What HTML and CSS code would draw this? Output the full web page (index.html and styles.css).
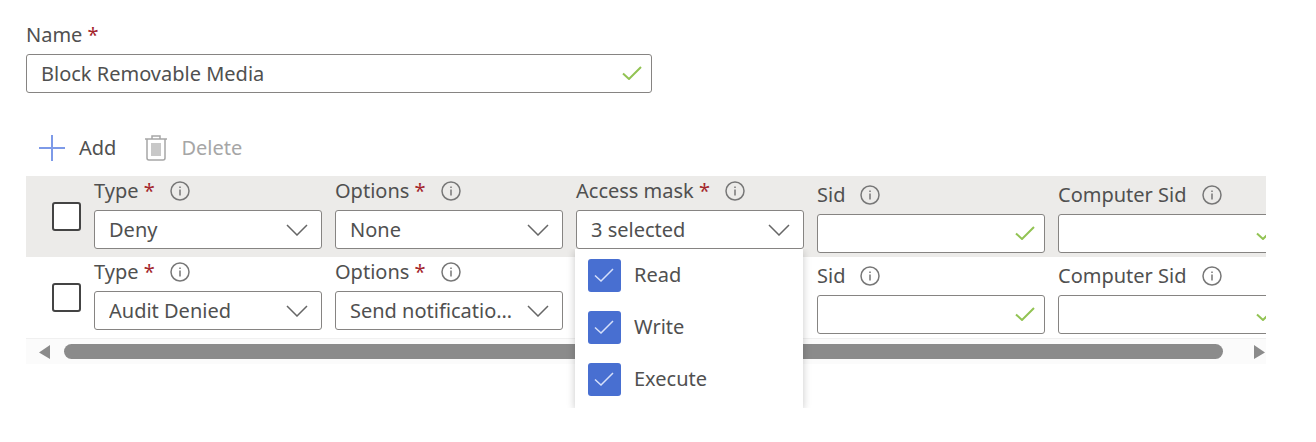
FILE: index.html
```html
<!DOCTYPE html>
<html lang="en">
<head>
	<meta charset="utf-8">
	<meta name="viewport" content="width=device-width, initial-scale=1">
	<title>Block Removable Media</title>
	<link rel="stylesheet" href="styles.css">
</head>
<body>
	<!-- shared icons -->
	<svg class="sprite" aria-hidden="true">
		<symbol id="check" viewBox="0 0 20 14"><path d="M1 7.5l6 5.5L19 1"/></symbol>
		<symbol id="chevron" viewBox="0 0 22 12"><path d="M1 1l10 10L21 1"/></symbol>
		<symbol id="info" viewBox="0 0 20 20"><circle cx="10" cy="10" r="9"/><path d="M10 8.5v6M10 5.5v1.6"/></symbol>
	</svg>

	<main class="page">
		<div class="name-field">
			<label class="label" for="name">Name <span class="req">*</span></label>
			<div class="box">
				<input type="text" id="name" value="Block Removable Media">
				<svg class="valid"><use href="#check"/></svg>
			</div>
		</div>

		<div class="toolbar">
			<button type="button" class="tool">
				<svg class="icon-add" viewBox="0 0 26 26"><path d="M13 0v26M0 13h26"/></svg>
				Add
			</button>
			<button type="button" class="tool" disabled>
				<svg class="icon-trash" viewBox="0 0 22 26">
					<path d="M0 4h22M7 3.500V1h8v2.500M2 4v19q0 2 2 2h14q2 0 2-2V4"/>
					<path class="fill" d="M6 8h10v13H6z"/>
				</svg>
				Delete
			</button>
		</div>

		<section class="entries">
			<div class="rows">
				<div class="row selected">
					<input type="checkbox" class="pick" aria-label="Select entry 1">
					<div class="field">
						<div class="head"><label for="type1">Type <span class="req">*</span></label><svg class="info"><use href="#info"/></svg></div>
						<div class="box">
							<select id="type1"><option>Deny</option></select>
							<svg class="chevron"><use href="#chevron"/></svg>
						</div>
					</div>
					<div class="field">
						<div class="head"><label for="options1">Options <span class="req">*</span></label><svg class="info"><use href="#info"/></svg></div>
						<div class="box">
							<select id="options1"><option>None</option></select>
							<svg class="chevron"><use href="#chevron"/></svg>
						</div>
					</div>
					<div class="field">
						<div class="head"><label for="mask1">Access mask <span class="req">*</span></label><svg class="info"><use href="#info"/></svg></div>
						<div class="box">
							<button type="button" id="mask1" class="multi" aria-expanded="true">3 selected</button>
							<svg class="chevron"><use href="#chevron"/></svg>
						</div>
					</div>
					<div class="field plain">
						<div class="head"><label for="sid1">Sid</label><svg class="info"><use href="#info"/></svg></div>
						<div class="box">
							<input type="text" id="sid1">
							<svg class="valid"><use href="#check"/></svg>
						</div>
					</div>
					<div class="field plain">
						<div class="head"><label for="csid1">Computer Sid</label><svg class="info"><use href="#info"/></svg></div>
						<div class="box">
							<input type="text" id="csid1">
							<svg class="valid"><use href="#check"/></svg>
						</div>
					</div>
				</div>

				<div class="row">
					<input type="checkbox" class="pick" aria-label="Select entry 2">
					<div class="field">
						<div class="head"><label for="type2">Type <span class="req">*</span></label><svg class="info"><use href="#info"/></svg></div>
						<div class="box">
							<select id="type2"><option>Audit Denied</option></select>
							<svg class="chevron"><use href="#chevron"/></svg>
						</div>
					</div>
					<div class="field">
						<div class="head"><label for="options2">Options <span class="req">*</span></label><svg class="info"><use href="#info"/></svg></div>
						<div class="box">
							<select id="options2"><option>Send notification and event</option></select>
							<svg class="chevron"><use href="#chevron"/></svg>
						</div>
					</div>
					<div class="field"></div>
					<div class="field plain">
						<div class="head"><label for="sid2">Sid</label><svg class="info"><use href="#info"/></svg></div>
						<div class="box">
							<input type="text" id="sid2">
							<svg class="valid"><use href="#check"/></svg>
						</div>
					</div>
					<div class="field plain">
						<div class="head"><label for="csid2">Computer Sid</label><svg class="info"><use href="#info"/></svg></div>
						<div class="box">
							<input type="text" id="csid2">
							<svg class="valid"><use href="#check"/></svg>
						</div>
					</div>
				</div>
			</div>

			<div class="scrollbar">
				<svg class="arrow" viewBox="0 0 12 14"><path d="M11 0v14L0 7.500z"/></svg>
				<div class="thumb"></div>
				<svg class="arrow" viewBox="0 0 12 14"><path d="M1 0v14l11-6.500z"/></svg>
			</div>

			<!-- open access mask list -->
			<div class="menu">
				<label class="option"><input type="checkbox" checked><svg><use href="#check"/></svg>Read</label>
				<label class="option"><input type="checkbox" checked><svg><use href="#check"/></svg>Write</label>
				<label class="option"><input type="checkbox" checked><svg><use href="#check"/></svg>Execute</label>
			</div>
		</section>
	</main>
</body>
</html>
```
FILE: styles.css
```css
*{box-sizing: border-box;margin: 0;padding: 0;}
body{font-family: "Noto Sans", sans-serif;font-size: 20px;line-height: 30px;color: #505050;background: #fff;}
input,select,button{font: inherit;color: inherit;}
svg{fill: none;stroke: #666;stroke-width: 1.5;flex: none;}
.sprite{position: absolute;width: 0;height: 0;}
.page{padding: 20px 50px 70px 26px;}
.req{color: #a4262c;}

/* name */
.name-field{max-width: 626px;}
.label{display: block;margin-bottom: 4px;}
.box{position: relative;}
.box input,.box select,.multi{display: block;width: 100%;height: 39px;padding: 0 14px;border: 1px solid #868482;border-radius: 3px;background: #fff;text-align: left;outline: none;}
.box select,.multi{appearance: none;padding-right: 48px;text-overflow: ellipsis;overflow: hidden;white-space: nowrap;}
.box input{padding-right: 40px;}
.valid{position: absolute;right: 10px;top: 12px;width: 20px;height: 14px;stroke: #92c353;stroke-width: 2;}
.chevron{position: absolute;right: 14px;top: 14px;width: 22px;height: 12px;}

/* toolbar */
.toolbar{display: flex;gap: 29px;padding: 39px 0 12px 13px;}
.tool{display: flex;align-items: center;gap: 14px;height: 32px;border: 0;background: none;}
.tool:disabled{color: #a6a6a6;}
.icon-add{width: 26px;height: 26px;stroke: #7d9ae8;stroke-width: 2;}
.icon-trash{width: 22px;height: 26px;stroke: #a6a6a6;}
.icon-trash .fill{fill: #c8c8c8;stroke: none;}

/* entries */
.entries{position: relative;}
.rows{overflow: hidden;border-bottom: 1px solid #f0f0f0;}
.row{display: flex;align-items: center;gap: 13px;height: 81px;padding-left: 26px;}
.selected{background: #ecebe9;}
.pick{appearance: none;flex: none;width: 29px;height: 29px;border: 2px solid #444;border-radius: 3px;background: #fff;}
.field{flex: none;align-self: flex-start;width: 228px;}
.plain{padding-top: 4px;}
.head{display: flex;align-items: center;gap: 15px;margin-bottom: 4px;}
.info{width: 20px;height: 20px;stroke: #777;}

.scrollbar{display: flex;align-items: center;gap: 13px;height: 25px;padding: 0 1px 0 13px;background: #fbfbfb;}
.thumb{flex: 1;height: 15px;margin-right: 17px;border-radius: 8px;background: #8b8b8b;}
.arrow{width: 12px;height: 14px;fill: #8b8b8b;stroke: none;}

/* dropdown list, third column */
.menu{position: absolute;left: 549px;top: 73px;width: 228px;padding: 0 13px 3px;background: #fff;box-shadow: 0 2px 8px rgba(0,0,0,.22);clip-path: inset(0 -10px);}
.option{display: flex;align-items: center;gap: 13px;height: 52px;position: relative;}
.option input{appearance: none;width: 33px;height: 33px;border-radius: 3px;background: #486fd1;}
.option svg{position: absolute;left: 6px;top: 19px;width: 20px;height: 14px;stroke: #d6e0fa;}
```
